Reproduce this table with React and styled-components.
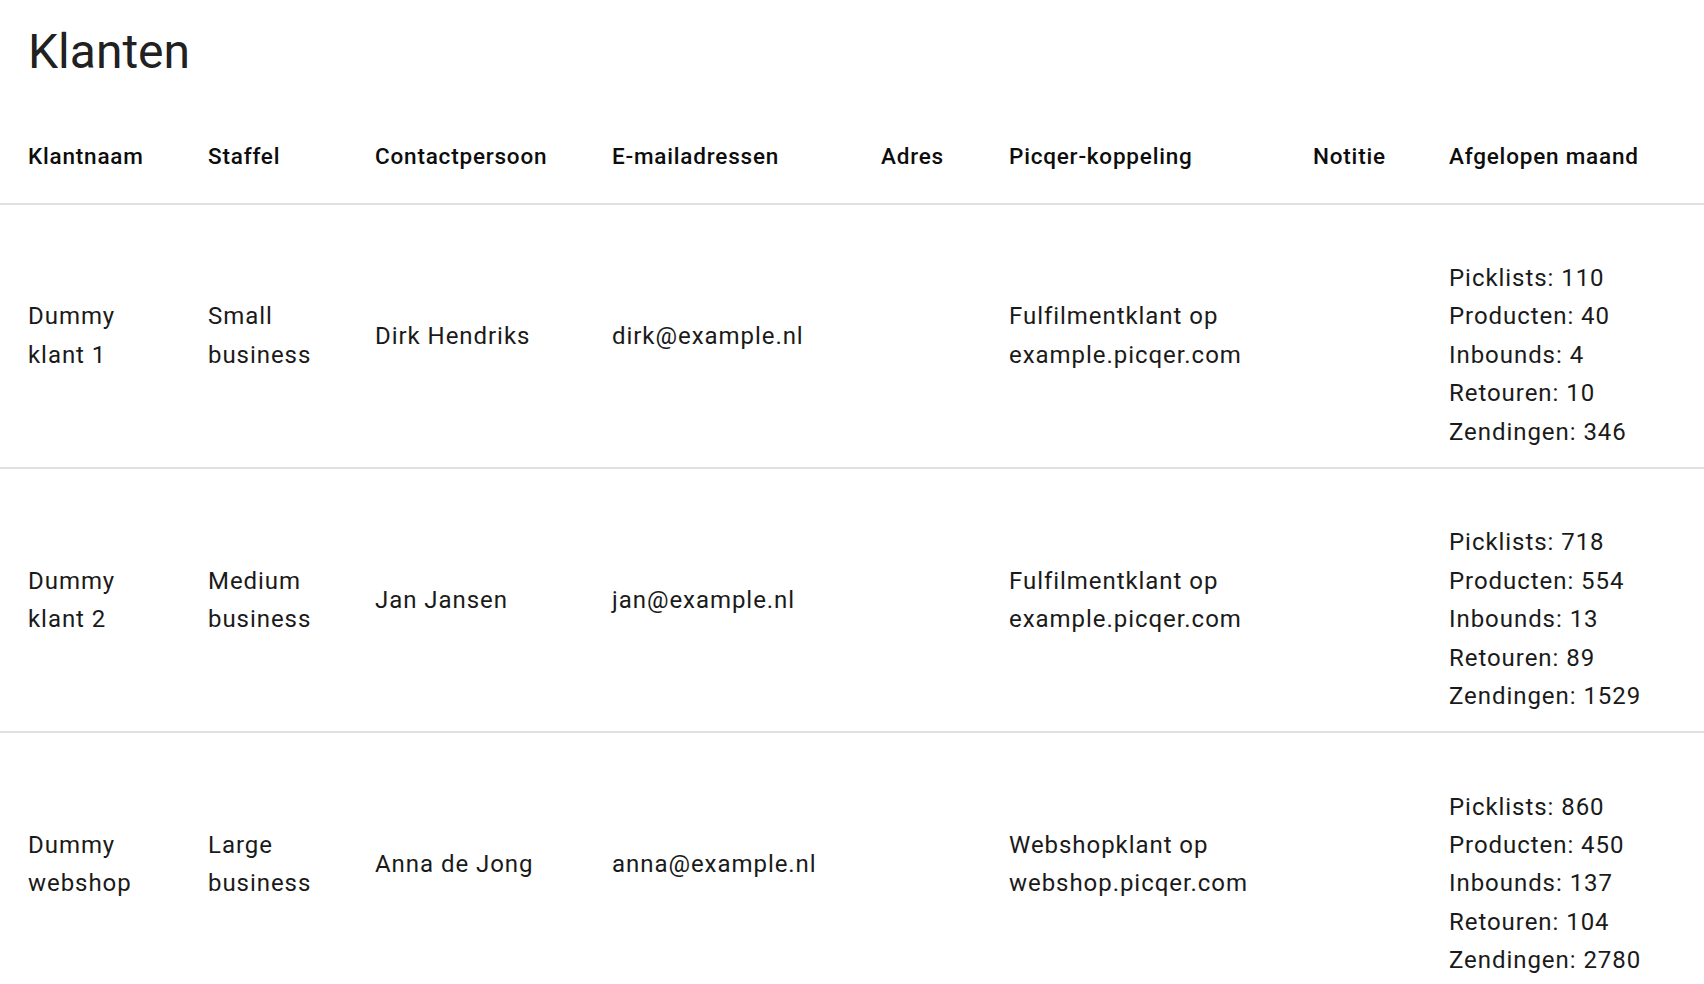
import React from "react";
import styled, { createGlobalStyle } from "styled-components";

const GlobalStyle = createGlobalStyle`
  html, body {
    margin: 0;
    padding: 0;
    background: #ffffff;
  }
  html {
    scrollbar-width: none;
  }
  body {
    font-family: Roboto, "Noto Sans", "Liberation Sans", sans-serif;
    color: rgba(0, 0, 0, 0.87);
  }
`;

const Page = styled.main`
  padding-top: 23px;
`;

const Title = styled.h1`
  margin: 0 0 29px;
  padding: 0 28px;
  font-size: 48px;
  font-weight: 400;
  line-height: 1.2;
  color: #212121;
`;

const columns = "180px 167px 237px 269px 128px 304px 136px 1fr";

const HeadRow = styled.div`
  display: grid;
  grid-template-columns: ${columns};
  align-items: center;
  min-height: 93px;
  padding: 0 28px;
  border-bottom: 2px solid #e0e0e0;
`;

const HeadCell = styled.div`
  font-size: 22.5px;
  font-weight: 500;
  letter-spacing: 0.8px;
  color: #0d0d0d;
  white-space: nowrap;
`;

const BodyRow = styled.div`
  display: grid;
  grid-template-columns: ${columns};
  align-items: center;
  padding: 16px 28px;
  border-bottom: 2px solid #e0e0e0;
`;

const Cell = styled.div`
  padding-right: 40px;
  font-size: 24px;
  line-height: 1.6;
  letter-spacing: 0.95px;
  color: #1a1a1a;
`;

const StatList = styled.div`
  display: flex;
  flex-direction: column;
  padding-top: 1.6em;
  font-size: 24px;
  line-height: 1.6;
  letter-spacing: 0.95px;
  color: #1a1a1a;
  white-space: nowrap;
`;

const headers = [
  "Klantnaam",
  "Staffel",
  "Contactpersoon",
  "E-mailadressen",
  "Adres",
  "Picqer-koppeling",
  "Notitie",
  "Afgelopen maand",
];

const customers = [
  {
    name: "Dummy klant 1",
    tier: "Small business",
    contact: "Dirk Hendriks",
    email: "dirk@example.nl",
    address: "",
    link: "Fulfilmentklant op example.picqer.com",
    note: "",
    stats: [
      ["Picklists", 110],
      ["Producten", 40],
      ["Inbounds", 4],
      ["Retouren", 10],
      ["Zendingen", 346],
    ],
  },
  {
    name: "Dummy klant 2",
    tier: "Medium business",
    contact: "Jan Jansen",
    email: "jan@example.nl",
    address: "",
    link: "Fulfilmentklant op example.picqer.com",
    note: "",
    stats: [
      ["Picklists", 718],
      ["Producten", 554],
      ["Inbounds", 13],
      ["Retouren", 89],
      ["Zendingen", 1529],
    ],
  },
  {
    name: "Dummy webshop",
    tier: "Large business",
    contact: "Anna de Jong",
    email: "anna@example.nl",
    address: "",
    link: "Webshopklant op webshop.picqer.com",
    note: "",
    stats: [
      ["Picklists", 860],
      ["Producten", 450],
      ["Inbounds", 137],
      ["Retouren", 104],
      ["Zendingen", 2780],
    ],
  },
];

export default function App() {
  return (
    <>
      <GlobalStyle />
      <Page>
        <Title>Klanten</Title>
        <HeadRow>
          {headers.map((h) => (
            <HeadCell key={h}>{h}</HeadCell>
          ))}
        </HeadRow>
        {customers.map((c) => (
          <BodyRow key={c.name}>
            <Cell>{c.name}</Cell>
            <Cell>{c.tier}</Cell>
            <Cell>{c.contact}</Cell>
            <Cell>{c.email}</Cell>
            <Cell>{c.address}</Cell>
            <Cell>{c.link}</Cell>
            <Cell>{c.note}</Cell>
            <StatList>
              {c.stats.map(([label, value]) => (
                <span key={label}>
                  {label}: {value}
                </span>
              ))}
            </StatList>
          </BodyRow>
        ))}
      </Page>
    </>
  );
}
